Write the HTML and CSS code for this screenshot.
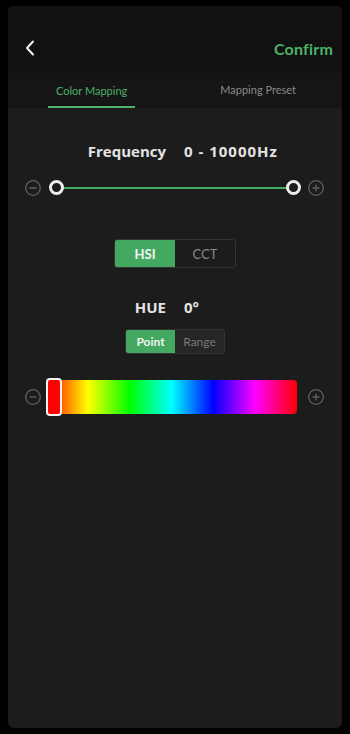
FILE: index.html
```html
<!DOCTYPE html>
<html>
<head>
<meta charset="utf-8">
<link rel="stylesheet" href="styles.css">
</head>
<body>
<div class="panel">
  <div class="header">
    <svg class="back" width="12" height="16" viewBox="0 0 12 16"><path d="M9 1.5 L3 8 L9 14.5" fill="none" stroke="#f2f2f2" stroke-width="2" stroke-linecap="round" stroke-linejoin="round"/></svg>
    <span class="confirm">Confirm</span>
  </div>
  <div class="tabs">
    <div class="tab active">Color Mapping</div>
    <div class="tab">Mapping Preset</div>
  </div>
  <div class="content">
    <div class="title"><span class="lbl">Frequency</span><span class="val wide">0 - 10000Hz</span></div>
    <div class="slider-row">
      <svg class="step" width="16" height="16" viewBox="0 0 16 16"><circle cx="8" cy="8" r="7.3" fill="none" stroke="#606060" stroke-width="1.3"/><path d="M4.5 8 H11.5" stroke="#606060" stroke-width="1.3"/></svg>
      <div class="track">
        <div class="track-line"></div>
        <div class="thumb left"></div>
        <div class="thumb right"></div>
      </div>
      <svg class="step" width="16" height="16" viewBox="0 0 16 16"><circle cx="8" cy="8" r="7.3" fill="none" stroke="#606060" stroke-width="1.3"/><path d="M4.5 8 H11.5 M8 4.5 V11.5" stroke="#606060" stroke-width="1.3"/></svg>
    </div>
    <div class="seg big">
      <div class="seg-item on">HSI</div>
      <div class="seg-item">CCT</div>
    </div>
    <div class="title hue"><span class="lbl">HUE</span><span class="val">0°</span></div>
    <div class="seg small">
      <div class="seg-item on">Point</div>
      <div class="seg-item">Range</div>
    </div>
    <div class="hue-row">
      <svg class="step" width="16" height="16" viewBox="0 0 16 16"><circle cx="8" cy="8" r="7.3" fill="none" stroke="#606060" stroke-width="1.3"/><path d="M4.5 8 H11.5" stroke="#606060" stroke-width="1.3"/></svg>
      <div class="hue-bar">
        <div class="hue-thumb"></div>
      </div>
      <svg class="step plus" width="16" height="16" viewBox="0 0 16 16"><circle cx="8" cy="8" r="7.3" fill="none" stroke="#606060" stroke-width="1.3"/><path d="M4.5 8 H11.5 M8 4.5 V11.5" stroke="#606060" stroke-width="1.3"/></svg>
    </div>
  </div>
</div>
</body>
</html>
```
FILE: styles.css
```css
* { box-sizing: border-box; }
html, body { margin: 0; padding: 0; background: #000; }
body { font-family: Lato, "Noto Sans", sans-serif; }
.panel {
  margin: 6px 8px 0 8px;
  width: 334px;
  height: 722px;
  border-radius: 6px;
  overflow: hidden;
  background: #1c1c1c;
  display: flex;
  flex-direction: column;
}
.header {
  height: 67px;
  background: #111111;
  display: flex;
  align-items: center;
  justify-content: space-between;
  padding: 0 9px 0 16px;
  padding-top: 17px;
}
.back { display: block; }
.confirm {
  color: #4db268;
  font-size: 16px;
  font-weight: 700;
  letter-spacing: 0.2px;
}
.tabs {
  height: 35px;
  background: #151515;
  display: flex;
  padding: 0 40px;
  justify-content: space-between;
}
.tab {
  font-size: 11px;
  color: #8a8a8a;
  display: flex;
  align-items: center;
  padding: 0 0 2px 0;
  height: 35px;
}
.tab.active {
  color: #4db268;
  border-bottom: 2px solid #4db268;
  padding: 0 8px;
  padding-top: 2px;
}
.tab:last-child { margin-right: 6px; }
.content {
  flex: 1;
  display: flex;
  flex-direction: column;
  align-items: center;
  padding-top: 33px;
}
.title {
  width: 100%;
  display: grid;
  grid-template-columns: 1fr 1fr;
  column-gap: 18px;
  height: 20px;
  line-height: 20px;
  font-family: "Open Sans", Lato, sans-serif;
  font-size: 15px;
  font-weight: 700;
  color: #e4e4e4;
}
.lbl { text-align: right; }
.val { text-align: left; }
.val.wide { letter-spacing: 1px; }
.slider-row {
  margin-top: 19px;
  width: 100%;
  display: flex;
  align-items: center;
  gap: 8px;
  padding: 0 18px 0 17px;
}
.step { display: block; flex: none; }
.track {
  position: relative;
  flex: 1;
  height: 16px;
}
.track-line {
  position: absolute;
  left: 7px;
  right: 7px;
  top: 7px;
  height: 2px;
  background: #43ad60;
}
.thumb {
  position: absolute;
  top: 0;
  width: 15px;
  height: 15px;
  border-radius: 50%;
  border: 3px solid #ececec;
  background: #1c1c1c;
}
.thumb.left { left: -0.5px; }
.thumb.right { right: -0.5px; }
.seg {
  display: flex;
  border: 1px solid #333;
  border-radius: 3px;
  overflow: hidden;
}
.seg.big { margin-top: 43px; height: 29px; }
.seg.big .seg-item { width: 60px; font-size: 13px; }
.seg-item {
  display: flex;
  align-items: center;
  justify-content: center;
  color: #8a8a8a;
}
.seg-item.on { background: #43a960; color: #f4f4f4; font-weight: 700; }
.title.hue { margin-top: 29px; }
.seg.small { margin-top: 12px; height: 25px; }
.seg.small .seg-item { width: 49px; font-size: 12px; }
.seg.small .seg-item:last-child { background: #262626; color: #7a7a7a; }
.hue-row {
  margin-top: 23px;
  width: 100%;
  display: flex;
  align-items: center;
  padding: 0 18px 0 17px;
  height: 39px;
}
.hue-bar {
  position: relative;
  margin-left: 5px;
  margin-right: 11px;
  flex: 1;
  height: 34px;
  border-radius: 4px;
  background: linear-gradient(to right, #ff0000 0%, #ffff00 16.67%, #00ff00 33.33%, #00ffff 50%, #0000ff 66.67%, #ff00ff 83.33%, #ff0000 100%);
}
.hue-thumb {
  position: absolute;
  left: 0;
  top: -2px;
  width: 16px;
  height: 38px;
  border: 2px solid #f4f4f4;
  border-radius: 4px;
  background: #ff0000;
}
```
